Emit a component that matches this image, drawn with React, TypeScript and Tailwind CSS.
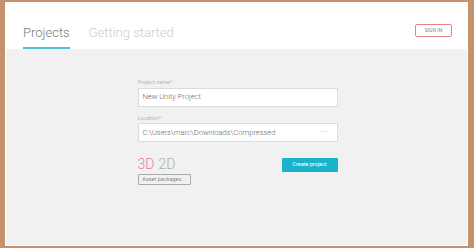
import React from "react";

export default function App() {
  return (
    <div
      className="w-[474px] h-[248px] bg-[#c4926c] pt-[2px] pl-[5px] pr-[6px] pb-[2px] flex"
      style={{ fontFamily: "Roboto, 'Liberation Sans', sans-serif" }}
    >
      <div className="flex-1 flex flex-col bg-white">
        {/* Header */}
        <div className="h-[47px] flex items-end justify-between pl-[18px] pr-[16px]">
          <div className="flex items-end gap-[19px]">
            <div className="flex flex-col items-stretch">
              <span className="text-[13px] font-light text-[#7a7a7a] leading-none pb-[8px]">Projects</span>
              <div className="h-[2px] bg-[#4fc3cf]" />
            </div>
            <span className="text-[13px] font-light text-[#cdcdcd] leading-none pb-[10px]">Getting started</span>
          </div>
          <div className="self-start mt-[22px] w-[37px] h-[13px] border border-[#e6828c] rounded-[2px] flex items-center justify-center">
            <span className="text-[5px] text-[#888] leading-none">SIGN IN</span>
          </div>
        </div>
        {/* Content */}
        <div className="flex-1 mx-[1px] mb-[1px] bg-[#f1f1f1] flex justify-center">
          <div className="w-[200px] pt-[31px] flex flex-col ml-[2px]">
            <span className="text-[5.5px] text-[#b8b8b8] leading-none">Project name*</span>
            <div className="mt-[2px] h-[19px] bg-white border border-[#dcdcdc] flex items-center px-[4px]">
              <span className="text-[7.5px] font-light text-[#666] leading-none">New Unity Project</span>
            </div>
            <span className="mt-[9px] text-[5.5px] text-[#b8b8b8] leading-none">Location*</span>
            <div className="mt-[2px] h-[19px] bg-white border border-[#dcdcdc] flex items-center justify-between px-[4px]">
              <span className="text-[7.5px] font-light text-[#666] leading-none">C:\Users\marc\Downloads\Compressed</span>
              <span className="text-[7px] text-[#a8a8a8] leading-none mr-[5px] tracking-[0.5px]">···</span>
            </div>
            <div className="mt-[15px] flex justify-between items-start">
              <div className="flex flex-col items-start">
                <div className="flex items-center gap-[4px] leading-none text-[14px] font-light">
                  <span className="text-[#e27aa2]">3D</span>
                  <span className="text-[#b0b0b0]">2D</span>
                </div>
                <div className="mt-[3px] w-[53px] h-[11px] border border-[#aaa] rounded-[1px] flex items-center justify-center">
                  <span className="text-[5.5px] text-[#888] leading-none">Asset packages...</span>
                </div>
              </div>
              <div className="w-[56px] h-[14px] bg-[#19b4cc] rounded-[1px] flex items-center justify-center mt-[1px]">
                <span className="text-[5.5px] text-white leading-none">Create project</span>
              </div>
            </div>
          </div>
        </div>
      </div>
    </div>
  );
}
